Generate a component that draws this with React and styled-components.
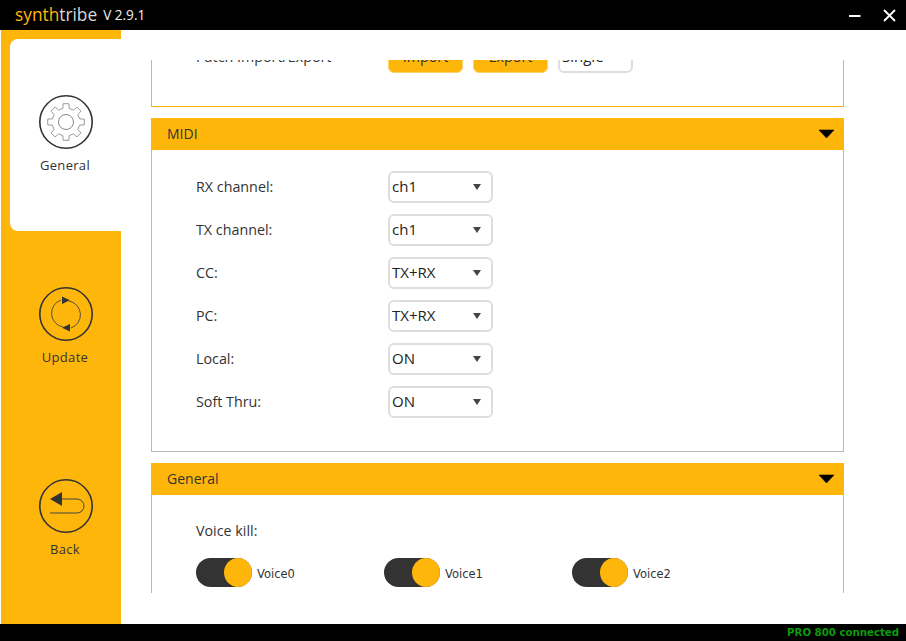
import React from "react";
import styled, { createGlobalStyle } from "styled-components";

const ORANGE = "#ffb60a";
const DARK = "#333333";

const Global = createGlobalStyle`
  html, body { margin: 0; padding: 0; background: #fff; }
  body { font-family: "Open Sans", "Noto Sans", sans-serif; color: ${DARK}; }
`;

const Frame = styled.div`
  width: 906px; height: 641px; display: flex; flex-direction: column; overflow: hidden; background: #000;
`;
const TitleBar = styled.header`
  height: 30px; flex: none; display: flex; align-items: center; padding: 0 10px 0 15px; background: #000; box-sizing: border-box;
`;
const Brand = styled.div`
  font-size: 17.3px; color: #d8d8d8; line-height: 30px;
  span { color: ${ORANGE}; }
`;
const Version = styled.div`
  font-size: 13.6px; color: #f0f0f0; margin-left: 6px; line-height: 30px;
`;
const WindowButtons = styled.div`
  margin-left: auto; display: flex; align-items: center; gap: 22px;
`;
const Body = styled.div`
  flex: none; height: 594px; display: flex; background: #fff; padding-left: 1px;
`;
const Sidebar = styled.nav`
  width: 120px; flex: none; background: ${ORANGE}; padding: 9px 0 0 9px; box-sizing: border-box;
  display: flex; flex-direction: column;
`;
const Tab = styled.div`
  height: 192px; flex: none; display: flex; flex-direction: column; align-items: center;
  padding: 56px 0 0 0; box-sizing: border-box; width: 111px;
  background: ${p => (p.$active ? "#fff" : "transparent")};
  border-radius: 8px 0 0 8px;
`;
const TabIcon = styled.svg`
  width: 56px; height: 56px; display: block; margin-top: -1px;
`;
const TabLabel = styled.div`
  font-size: 13px; line-height: 18px; margin: 6px 1px 0 0; color: ${DARK}; letter-spacing: .3px;
`;
const Main = styled.main`
  flex: 1; min-width: 0; padding: 30px 62px 31px 30px; box-sizing: border-box; display: flex;
`;
const Scroller = styled.div`
  flex: 1; overflow: hidden; display: flex; flex-direction: column; gap: 11px;
`;
const Panel = styled.section`
  flex: none; border: 1px solid ${p => (p.$grey ? "#b9b9b9" : ORANGE)};
  border-top: none; box-sizing: border-box; width: 693px;
`;
const PanelHeader = styled.div`
  height: 32px; margin: 0 -1px; background: ${ORANGE}; display: flex; align-items: center; justify-content: space-between;
  padding: 0 8px 0 16px; font-size: 14px; color: ${DARK};
`;
const HeaderTitle = styled.span`
  margin-top: -2px;
`;
const PanelBody = styled.div`
  padding: ${p => p.$pad || "21px 0 33px 44px"}; display: flex; flex-direction: column; gap: 11px;
`;
const Row = styled.div`
  display: flex; align-items: center; height: 32px;
  ${p => (p.$scrolled ? "margin-top: -19px;" : "")}
`;
const Label = styled.div`
  width: 192px; flex: none; font-size: 14.3px; color: ${DARK}; margin-top: -2px;
`;
const SelectBox = styled.div`
  width: ${p => p.$w || 105}px; height: 32px; box-sizing: border-box; border: 2px solid #dcdee0; border-radius: 6px;
  background: #fff; display: flex; align-items: center; justify-content: space-between; padding: 0 10px 0 2px;
  color: #222;
  &::after { content: ""; border: 4px solid transparent; border-top: 6px solid #444; border-bottom: none; }
`;
const SelectValue = styled.span`
  font-size: 15px; margin-top: -2px;
`;
const ActionButton = styled.div`
  width: 75px; height: 32px; box-sizing: border-box; border-radius: 6px; background: ${ORANGE}; border: 1px solid #ffd368;
  display: flex; align-items: center; justify-content: center; font-size: 14.3px; color: ${DARK}; margin-right: 10px;
  padding-bottom: 2px;
`;
const ToggleRow = styled.div`
  display: grid; grid-template-columns: repeat(3, 188px); height: 47px;
`;
const ToggleItem = styled.div`
  display: flex; align-items: flex-start; gap: 5px;
`;
const Toggle = styled.div`
  width: 56px; height: 29px; border-radius: 15px; background: ${DARK}; display: flex; justify-content: flex-end; flex: none;
  &::after { content: ""; width: 28px; height: 29px; border-radius: 50%; background: ${ORANGE}; }
`;
const ToggleText = styled.div`
  font-family: "DejaVu Sans", sans-serif; font-size: 11.5px; line-height: 33px; color: ${DARK};
`;
const VoiceLabel = styled.div`
  font-size: 14.3px; line-height: 32px; color: ${DARK};
`;
const StatusBar = styled.footer`
  flex: none; height: 17px; background: #000; display: flex; align-items: center; justify-content: flex-end; padding-right: 7px;
  font-family: "DejaVu Sans", sans-serif; font-weight: 700; font-size: 10.2px; color: #0b9b0b;
`;
const Caret = () => (
  <svg width="18" height="10" viewBox="0 0 18 10"><path d="M1 1h15L8.5 9z" fill="#000" stroke="#000" strokeWidth=".6" strokeLinejoin="round" /></svg>
);

function gearPath(cx, cy, rOut, rIn, teeth) {
  const pts = [];
  const step = (Math.PI * 2) / teeth;
  for (let i = 0; i < teeth; i++) {
    const a = i * step - Math.PI / 2;
    const w = step * 0.2, v = step * 0.29;
    [[a - v, rIn], [a - w, rOut], [a + w, rOut], [a + v, rIn]].forEach(([t, r]) => {
      pts.push(`${(cx + r * Math.cos(t)).toFixed(2)} ${(cy + r * Math.sin(t)).toFixed(2)}`);
    });
  }
  return "M" + pts.join("L") + "Z";
}

const Ring = () => <circle cx="28" cy="28" r="26.2" fill="none" stroke="#333" strokeWidth="1.6" />;

const GearIcon = () => (
  <TabIcon viewBox="0 0 56 56">
    <Ring />
    <path d={gearPath(28, 28, 18.5, 14, 8)} fill="none" stroke="#999" strokeWidth="1" strokeLinejoin="round" />
    <circle cx="28" cy="28" r="7.5" fill="none" stroke="#888" strokeWidth="1" />
  </TabIcon>
);
const UpdateIcon = () => (
  <TabIcon viewBox="0 0 56 56">
    <Ring />
    <path d="M31 15a14 14 0 0 1 2 27M25 41a14 14 0 0 1-2-27" fill="none" stroke="#444" strokeWidth=".9" />
    <path d="M24 10.5l8 3.8-8 3.8zM32 38l-8 3.8 8 3.8z" fill="#333" />
  </TabIcon>
);
const BackIcon = () => (
  <TabIcon viewBox="0 0 56 56">
    <Ring />
    <path d="M20 21h19a7 7 0 0 1 0 14H12" fill="none" stroke="#444" strokeWidth="1" />
    <path d="M24 14v14l-12-7z" fill="#333" />
  </TabIcon>
);

const Tabs = [
  ["General", GearIcon, true],
  ["Update", UpdateIcon, false],
  ["Back", BackIcon, false],
];
const midi = [
  ["RX channel:", "ch1"],
  ["TX channel:", "ch1"],
  ["CC:", "TX+RX"],
  ["PC:", "TX+RX"],
  ["Local:", "ON"],
  ["Soft Thru:", "ON"],
];

export default function App() {
  return (
    <Frame>
      <Global />
      <TitleBar>
        <Brand><span>synth</span>tribe</Brand>
        <Version>V 2.9.1</Version>
        <WindowButtons>
          <svg width="12" height="12" viewBox="0 0 12 12"><path d="M0 7h11.5" stroke="#fff" strokeWidth="2" /></svg>
          <svg width="13" height="13" viewBox="0 0 13 13"><path d="M1 1l11 11M12 1L1 12" stroke="#fff" strokeWidth="1.8" /></svg>
        </WindowButtons>
      </TitleBar>
      <Body>
        <Sidebar>
          {Tabs.map(([name, Icon, active]) => (
            <Tab key={name} $active={active}>
              <Icon />
              <TabLabel>{name}</TabLabel>
            </Tab>
          ))}
        </Sidebar>
        <Main>
          <Scroller>
            <Panel>
              <PanelBody $pad="0 0 33px 44px">
                <Row $scrolled>
                  <Label>Patch Import/Export</Label>
                  <ActionButton>Import</ActionButton>
                  <ActionButton>Export</ActionButton>
                  <SelectBox $w={75}><SelectValue>Single</SelectValue></SelectBox>
                </Row>
              </PanelBody>
            </Panel>
            <Panel $grey>
              <PanelHeader><HeaderTitle>MIDI</HeaderTitle><Caret /></PanelHeader>
              <PanelBody>
                {midi.map(([label, value]) => (
                  <Row key={label}>
                    <Label>{label}</Label>
                    <SelectBox><SelectValue>{value}</SelectValue></SelectBox>
                  </Row>
                ))}
              </PanelBody>
            </Panel>
            <Panel>
              <PanelHeader><HeaderTitle>General</HeaderTitle><Caret /></PanelHeader>
              <PanelBody $pad="20px 0 0 44px">
                <VoiceLabel>Voice kill:</VoiceLabel>
                <ToggleRow>
                  {["Voice0", "Voice1", "Voice2"].map(v => (
                    <ToggleItem key={v}>
                      <Toggle />
                      <ToggleText>{v}</ToggleText>
                    </ToggleItem>
                  ))}
                </ToggleRow>
              </PanelBody>
            </Panel>
          </Scroller>
        </Main>
      </Body>
      <StatusBar>PRO 800 connected</StatusBar>
    </Frame>
  );
}
